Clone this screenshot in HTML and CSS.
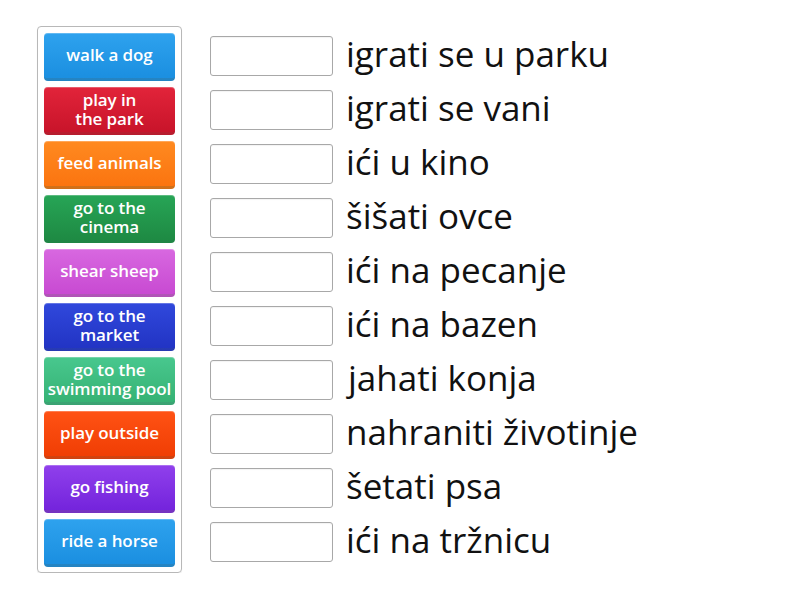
FILE: index.html
```html
<!DOCTYPE html>
<html>
<head>
<meta charset="utf-8">
<link rel="stylesheet" href="styles.css">
</head>
<body>
<div class="page">
  <div class="bank">
    <div class="tile c-blue">walk a dog</div>
    <div class="tile c-red">play in<br>the park</div>
    <div class="tile c-orange">feed animals</div>
    <div class="tile c-green">go to the<br>cinema</div>
    <div class="tile c-pink">shear sheep</div>
    <div class="tile c-navy">go to the<br>market</div>
    <div class="tile c-teal">go to the<br>swimming pool</div>
    <div class="tile c-redorange">play outside</div>
    <div class="tile c-purple">go fishing</div>
    <div class="tile c-blue">ride a horse</div>
  </div>
  <div class="rows">
    <div class="row"><div class="slot"></div><span class="label">igrati se u parku</span></div>
    <div class="row"><div class="slot"></div><span class="label">igrati se vani</span></div>
    <div class="row"><div class="slot"></div><span class="label">ići u kino</span></div>
    <div class="row"><div class="slot"></div><span class="label">šišati ovce</span></div>
    <div class="row"><div class="slot"></div><span class="label">ići na pecanje</span></div>
    <div class="row"><div class="slot"></div><span class="label">ići na bazen</span></div>
    <div class="row"><div class="slot"></div><span class="label shift">jahati konja</span></div>
    <div class="row"><div class="slot"></div><span class="label">nahraniti životinje</span></div>
    <div class="row"><div class="slot"></div><span class="label">šetati psa</span></div>
    <div class="row"><div class="slot"></div><span class="label">ići na tržnicu</span></div>
  </div>
</div>
</body>
</html>
```

FILE: styles.css
```css
html, body {
  margin: 0;
  padding: 0;
  background: #ffffff;
}
body {
  font-family: "Open Sans", Lato, sans-serif;
}
.page {
  display: flex;
  align-items: flex-start;
  padding: 26px 0 0 37px;
}
.bank {
  width: 131px;
  padding: 6px 6px 5px 6px;
  border: 1px solid #b8b8b8;
  border-radius: 4px;
  display: flex;
  flex-direction: column;
  gap: 6px;
  box-shadow: 0 1px 1px rgba(0,0,0,0.08);
}
.tile {
  height: 48px;
  box-sizing: border-box;
  border-radius: 4px;
  color: #ffffff;
  font-size: 17px;
  font-weight: 600;
  line-height: 19px;
  letter-spacing: -0.1px;
  text-align: center;
  display: flex;
  align-items: center;
  justify-content: center;
  padding-bottom: 2px;
  border-bottom: 3px solid rgba(0,0,0,0.18);
  box-shadow: inset 0 1px 0 rgba(255,255,255,0.25);
  white-space: nowrap;
}
.c-blue { background: linear-gradient(#2ea2ee, #1b8fe0); }
.c-red { background: linear-gradient(#e2243a, #c8142a); }
.c-orange { background: linear-gradient(#ff8a20, #fb7410); }
.c-green { background: linear-gradient(#27a556, #1e8a43); }
.c-pink { background: linear-gradient(#d868e0, #c84ad2); }
.c-navy { background: linear-gradient(#3048dc, #2234c4); }
.c-teal { background: linear-gradient(#48c88e, #36b274); }
.c-redorange { background: linear-gradient(#ff5214, #f03e04); }
.c-purple { background: linear-gradient(#9040ec, #7424dc); }

.rows {
  margin-left: 28px;
  padding-top: 10px;
  display: flex;
  flex-direction: column;
  gap: 14px;
}
.row {
  display: flex;
  align-items: center;
  height: 40px;
}
.slot {
  width: 121px;
  height: 38px;
  border: 1px solid #a8a8a8;
  border-radius: 3px;
  background: #ffffff;
  box-shadow: inset 0 1px 1px rgba(0,0,0,0.05);
}
.label {
  margin-left: 13px;
  font-size: 35px;
  color: #111111;
  white-space: nowrap;
  line-height: 40px;
  padding-bottom: 4px;
}
.label.shift { margin-left: 15px; }
```
